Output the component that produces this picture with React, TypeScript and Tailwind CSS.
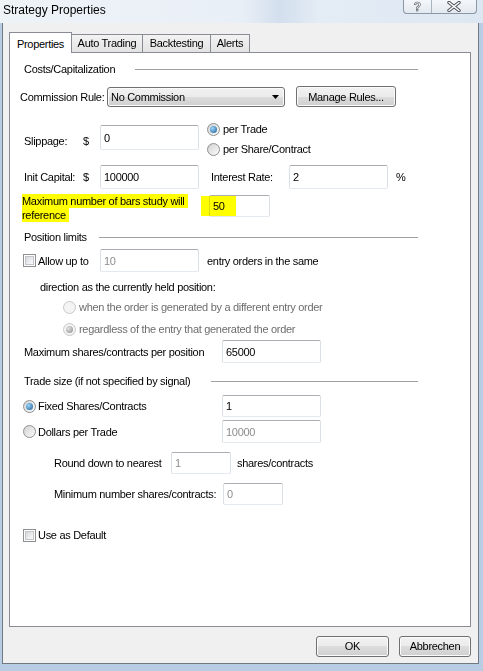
import React from "react";

type RadioProps = { checked?: boolean; disabled?: boolean };

// Aero style option button
const Radio = ({ checked, disabled }: RadioProps) => (
  <span
    className={`flex h-[13px] w-[13px] shrink-0 items-center justify-center rounded-full border ${
      disabled
        ? "border-[#c8c8c8] bg-[#f4f4f4]"
        : "border-[#8e8f8f] bg-[linear-gradient(135deg,#d2d2d2,#fbfbfb)]"
    }`}
  >
    {checked && (
      <span
        className={`h-[7px] w-[7px] rounded-full ${
          disabled
            ? "bg-[radial-gradient(circle_at_35%_35%,#e2e2e2,#8c8c8c)]"
            : "bg-[radial-gradient(circle_at_35%_35%,#9ad6ff,#1a5a8e)]"
        }`}
      />
    )}
  </span>
);

const Checkbox = () => (
  <span className="flex h-[13px] w-[13px] shrink-0 items-center justify-center border border-[#8e8f8f] bg-white">
    <span className="h-[9px] w-[9px] border border-[#c3c5ca] bg-[linear-gradient(135deg,#d6d7da,#fdfdfd)]" />
  </span>
);

type TextBoxProps = { value: string; className: string; disabled?: boolean };

const TextBox = ({ value, className, disabled }: TextBoxProps) => (
  <div
    className={`flex shrink-0 items-center rounded-[2px] border border-[#abadb3] border-x-[#dbdfe6] border-b-[#e3e9ef] bg-white pl-[3px] ${
      disabled ? "text-[#8d8d8d]" : "text-black"
    } ${className}`}
  >
    {value}
  </div>
);

const WinButton = ({ children, className }: { children: React.ReactNode; className: string }) => (
  <div
    className={`flex shrink-0 items-center justify-center rounded-[3px] border border-[#707070] bg-[linear-gradient(to_bottom,#f2f2f2_0%,#ebebeb_50%,#dddddd_50%,#cfcfcf_100%)] shadow-[inset_0_0_0_1px_#fbfbfb] ${className}`}
  >
    {children}
  </div>
);

const GroupHeader = ({ title, className, labelWidth }: { title: string; className: string; labelWidth: string }) => (
  <div className={`flex h-[14px] items-center pl-[14px] ${className}`}>
    <span className={`shrink-0 ${labelWidth}`}>{title}</span>
    <span className="mr-[52px] h-px flex-1 bg-[#a0a0a0] shadow-[0_1px_0_#ffffff]" />
  </div>
);

const tabs = ["Auto Trading", "Backtesting", "Alerts"];
const tabWidths = ["w-[71px]", "w-[68px]", "w-[39px]"];

const StrategyProperties = () => {
  return (
    <div className="flex h-[671px] w-[483px] flex-col overflow-hidden bg-[#b8cce4] font-['Liberation_Sans',Arial,sans-serif] text-black">
      {/* TITLE BAR */}
      <div className="relative h-[23px] shrink-0 bg-[linear-gradient(90deg,#eef3f8_0%,#e9eff6_50%,#d3dfee_58%,#e4ecf5_66%,#dde7f2_100%)]">
        <div className="pl-[3px] text-[12px] leading-[20px]">Strategy Properties</div>
        <div className="absolute right-[6px] top-0 flex h-[14px] w-[74px] overflow-hidden rounded-b-[4px] border border-t-0 border-[#8d98a6] bg-[linear-gradient(to_bottom,#f4f7fa,#e3e9f0)]">
          <div className="flex w-[28px] items-center justify-center border-r border-[#a9b3bf] text-[12px] font-bold leading-none text-white [-webkit-text-stroke:0.6px_#4a4f57]">
            ?
          </div>
          <div className="flex flex-1 items-center justify-center">
            <svg width="14" height="11" viewBox="0 0 14 11">
              <path d="M2 1.5 L12 9.5 M12 1.5 L2 9.5" stroke="#4a4f57" strokeWidth="3.4" strokeLinecap="round" />
              <path d="M2 1.5 L12 9.5 M12 1.5 L2 9.5" stroke="#ffffff" strokeWidth="1.6" strokeLinecap="round" />
            </svg>
          </div>
        </div>
      </div>

      {/* CLIENT AREA */}
      <div className="ml-[2px] flex h-[641px] w-[477px] shrink-0 flex-col border-x border-b border-[#6f7883] bg-[#f0f0f0] text-[11px] tracking-[-0.3px]">
        {/* TABS */}
        <div className="ml-[6px] mt-[9px] flex items-end">
          <div className="relative z-10 -mb-px flex h-[21px] w-[63px] items-start justify-center border border-b-0 border-[#898c95] bg-white pt-[3px]">
            Properties
          </div>
          {tabs.map((tab, i) => (
            <div
              key={tab}
              className={`flex h-[18px] items-center justify-center border border-l-0 border-b-0 border-[#898c95] bg-[linear-gradient(to_bottom,#f3f3f3,#e3e3e3)] ${tabWidths[i]}`}
            >
              {tab}
            </div>
          ))}
        </div>

        {/* PANEL */}
        <div className="ml-[6px] flex h-[575px] w-[462px] flex-col border border-[#898c95] bg-white leading-[14px]">
          <GroupHeader title="Costs/Capitalization" className="mt-[9px]" labelWidth="w-[111px]" />

          <div className="mt-[9px] flex h-[23px] items-center pl-[10px]">
            <span className="w-[87px] shrink-0">Commission Rule:</span>
            <div className="flex h-[20px] w-[178px] shrink-0 items-center justify-between rounded-[3px] border border-[#707070] bg-[linear-gradient(to_bottom,#f2f2f2_0%,#ebebeb_50%,#dddddd_50%,#cfcfcf_100%)] pl-[3px] pr-[5px] shadow-[inset_0_0_0_1px_#fbfbfb]">
              <span>No Commission</span>
              <svg width="7" height="4" viewBox="0 0 7 4">
                <path d="M0 0 H7 L3.5 4 Z" fill="#000" />
              </svg>
            </div>
            <WinButton className="ml-[11px] h-[21px] w-[100px]">Manage Rules...</WinButton>
          </div>

          <div className="mt-[17px] flex h-[26px] items-start pl-[14px]">
            <span className="mt-[9px] w-[59px] shrink-0">Slippage:</span>
            <span className="mt-[9px] w-[17px] shrink-0">$</span>
            <TextBox value="0" className="h-[25px] w-[99px]" />
            <div className="-mt-[3px] ml-[8px] flex flex-col gap-[6px]">
              <div className="flex h-[14px] items-center gap-[3px]">
                <Radio checked />
                <span>per Trade</span>
              </div>
              <div className="flex h-[14px] items-center gap-[3px]">
                <Radio />
                <span>per Share/Contract</span>
              </div>
            </div>
          </div>

          <div className="mt-[14px] flex h-[24px] items-center pl-[14px]">
            <span className="w-[59px] shrink-0">Init Capital:</span>
            <span className="w-[17px] shrink-0">$</span>
            <TextBox value="100000" className="h-[24px] w-[99px]" />
            <span className="ml-[12px] w-[78px] shrink-0">Interest Rate:</span>
            <TextBox value="2" className="h-[24px] w-[99px]" />
            <span className="ml-[8px]">%</span>
          </div>

          <div className="mt-[4px] flex h-[30px] items-start pl-[12px]">
            <div className="mt-[1px] w-[187px] shrink-0 pr-[10px]">
              <span className="bg-[#ffff00] py-[1px] pr-[3px] [box-decoration-break:clone]">
                Maximum number of bars study will reference
              </span>
            </div>
            <div className="relative mt-[2px]">
              <TextBox value="50" className="h-[22px] w-[61px]" />
              <div className="absolute -left-[8px] top-[1px] h-[20px] w-[35px] bg-[#ffff00] mix-blend-multiply" />
            </div>
          </div>

          <GroupHeader title="Position limits" className="mt-[7px]" labelWidth="w-[75px]" />

          <div className="mt-[5px] flex h-[23px] items-center pl-[13px]">
            <Checkbox />
            <span className="ml-[2px] w-[62px] shrink-0">Allow up to</span>
            <TextBox value="10" disabled className="h-[23px] w-[99px]" />
            <span className="ml-[8px]">entry orders in the same</span>
          </div>

          <div className="mt-[8px] flex h-[14px] items-center pl-[30px]">direction as the currently held position:</div>

          <div className="mt-[6px] flex h-[14px] items-center gap-[3px] pl-[53px] text-[#6d6d6d]">
            <Radio disabled />
            <span>when the order is generated by a different entry order</span>
          </div>

          <div className="mt-[8px] flex h-[14px] items-center gap-[3px] pl-[53px] text-[#6d6d6d]">
            <Radio checked disabled />
            <span>regardless of the entry that generated the order</span>
          </div>

          <div className="mt-[4px] flex h-[23px] items-center pl-[14px]">
            <span className="w-[198px] shrink-0">Maximum shares/contracts per position</span>
            <TextBox value="65000" className="h-[23px] w-[99px]" />
          </div>

          <GroupHeader title="Trade size (if not specified by signal)" className="mt-[11px]" labelWidth="w-[187px]" />

          <div className="mt-[7px] flex h-[22px] items-center pl-[13px]">
            <div className="flex w-[199px] shrink-0 items-center gap-[2px]">
              <Radio checked />
              <span>Fixed Shares/Contracts</span>
            </div>
            <TextBox value="1" className="h-[22px] w-[99px]" />
          </div>

          <div className="mt-[3px] flex h-[23px] items-center pl-[13px]">
            <div className="flex w-[199px] shrink-0 items-center gap-[2px]">
              <Radio />
              <span>Dollars per Trade</span>
            </div>
            <TextBox value="10000" disabled className="h-[23px] w-[99px]" />
          </div>

          <div className="mt-[9px] flex h-[22px] items-center pl-[44px]">
            <span className="w-[117px] shrink-0">Round down to nearest</span>
            <TextBox value="1" disabled className="h-[22px] w-[60px]" />
            <span className="ml-[6px]">shares/contracts</span>
          </div>

          <div className="mt-[9px] flex h-[22px] items-center pl-[44px]">
            <span className="w-[169px] shrink-0">Minimum number shares/contracts:</span>
            <TextBox value="0" disabled className="h-[22px] w-[60px] border-[#a6a6a6] border-x-[#b8b8b8] border-b-[#c8c8c8]" />
          </div>

          <div className="mt-[23px] flex h-[14px] items-center pl-[13px]">
            <Checkbox />
            <span className="ml-[2px]">Use as Default</span>
          </div>
        </div>

        {/* FOOTER */}
        <div className="mt-[9px] flex justify-end gap-[10px] pr-[7px]">
          <WinButton className="h-[21px] w-[73px]">OK</WinButton>
          <WinButton className="h-[21px] w-[72px]">Abbrechen</WinButton>
        </div>
      </div>
    </div>
  );
};

export default function App() {
  return <StrategyProperties />;
}
